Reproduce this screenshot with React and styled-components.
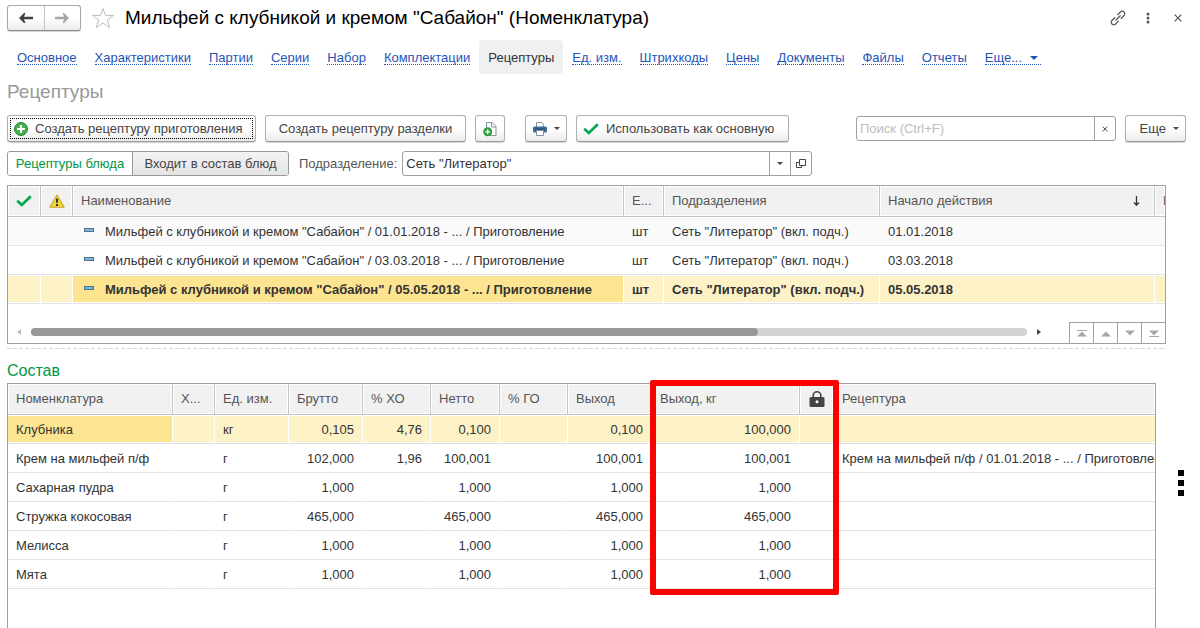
import styled, { createGlobalStyle, css } from 'styled-components'
import { useState } from 'react'

const GlobalStyle = createGlobalStyle`
	* { box-sizing: border-box; }
	body {
		margin: 0;
		background: #fff;
		color: #333;
		font: 13px/16px "Liberation Sans", Arial, sans-serif;
	}
	button, input, table {
		font: inherit;
		color: inherit;
	}
	button { cursor: pointer; }
	svg { display: block; flex: none; }
`

const Page = styled.div`
	display: flex;
	flex-direction: column;
	min-height: 100vh;
	padding: 4px 14px 0 7px;
`

const Header = styled.header`
	display: flex;
	align-items: center;
	height: 28px;
`

const History = styled.div`
	display: flex;
	width: 74px;
	height: 26px;
	border: 1px solid #a8a8a8;
	border-bottom-color: #8c8c8c;
	border-radius: 3px;
	background: linear-gradient(#fff 50%, #ececec);
	box-shadow: 0 1px 1px #d0d0d0;
`

const HistoryBtn = styled.button`
	flex: 1;
	display: flex;
	align-items: center;
	justify-content: center;
	padding: 0;
	border: 0;
	border-left: ${props => props.$split ? '1px solid #c4c4c4' : '0'};
	background: none;
	color: ${props => props.$split ? '#a6a6a6' : '#404040'};
`

const IconBtn = styled.button`
	display: flex;
	align-items: center;
	justify-content: center;
	width: ${props => props.$w || 16}px;
	height: 24px;
	padding: 0;
	border: 0;
	background: none;
	color: #555;
`

const Title = styled.h1`
	flex: 1;
	margin: 0;
	font-size: 19px;
	font-weight: 400;
	line-height: 24px;
	color: #000;
`

const WindowBtns = styled.div`
	display: flex;
	gap: 14px;
`

const Tabs = styled.nav`
	display: flex;
	height: 34px;
	margin-top: 8px;
	padding-left: 1px;
`

const Tab = styled.a`
	display: flex;
	align-items: center;
	padding: 2px 9px 0;
	border-radius: 4px;
	color: ${props => props.$active ? '#333' : '#1f54b8'};
	background: ${props => props.$active ? '#f0f0f0' : 'none'};
	text-decoration: none;
	white-space: nowrap;

	span {
		display: flex;
		align-items: center;
		gap: 8px;
		height: 14px;
		border-bottom: 1px dotted ${props => props.$active ? 'transparent' : '#1f54b8'};
	}
	svg { margin-right: 3px; }
`

const Heading = styled.h2`
	margin: 6px 0 0;
	font-size: 19px;
	font-weight: 400;
	line-height: 24px;
	color: #999;
`

const Toolbar = styled.div`
	display: flex;
	align-items: center;
	gap: 9px;
	margin-top: 11px;
`

const Button = styled.button`
	display: flex;
	align-items: center;
	justify-content: ${props => props.$start ? 'flex-start' : 'center'};
	gap: 7px;
	min-width: ${props => props.$w}px;
	height: 27px;
	margin-right: ${props => props.$gap || 0}px;
	padding: 0 6px;
	border: 1px solid #b0b0b0;
	border-bottom-color: #999;
	border-radius: 3px;
	background: linear-gradient(#fff 50%, #ebebeb);
	box-shadow: 0 1px 1px #d4d4d4;
	color: #444;
	white-space: nowrap;

	${props => props.$focus && css`
		outline: 1px dotted #000;
		outline-offset: -4px;
	`}
`

const MoreButton = styled(Button)`
	justify-content: flex-end;
`

const Field = styled.div`
	display: flex;
	width: ${props => props.$w}px;
	height: 25px;
	margin-left: ${props => props.$right ? 'auto' : '0'};
	border: 1px solid #a0a0a0;
	border-radius: 3px;
	background: #fff;

	input {
		flex: 1;
		min-width: 0;
		padding: 0 3px;
		border: 0;
		outline: 0;
		background: none;
		color: #333;
	}
	input::placeholder { color: #bdbdbd; }
`

const FieldBtn = styled.button`
	display: flex;
	align-items: center;
	justify-content: center;
	width: 21px;
	padding: 0;
	border: 0;
	border-left: 1px solid #a0a0a0;
	background: none;
	color: #444;
`

const FilterRow = styled.div`
	display: flex;
	align-items: center;
	margin-top: 9px;
	color: #555;

	label { margin: 0 5px 0 10px; }
`

const Switch = styled.div`
	display: flex;
	height: 25px;
	border: 1px solid #999;
	border-radius: 3px;
	overflow: hidden;
`

const SwitchBtn = styled.button`
	min-width: ${props => props.$w}px;
	padding: 0;
	border: 0;
	border-left: ${props => props.$second ? '1px solid #999' : '0'};
	background: ${props => props.$on ? '#fff' : 'linear-gradient(#f4f4f4, #e4e4e4)'};
	color: ${props => props.$on ? '#009646' : '#444'};
	white-space: nowrap;
`

const ListBox = styled.div`
	margin: 9px 20px 0 0;
	border: 1px solid #a0a0a0;
	overflow: hidden;
`

const Table = styled.table`
	width: 100%;
	table-layout: fixed;
	border-collapse: separate;
	border-spacing: 0;
`

const Col = styled.col`
	width: ${props => props.$w ? props.$w + 'px' : 'auto'};
`

const Th = styled.th`
	height: 31px;
	padding: 0 0 0 ${props => props.$icon ? 0 : 8}px;
	border-right: ${props => props.$last ? '0' : '1px solid #c4c4c4'};
	border-bottom: 1px solid #c4c4c4;
	background: #f1f1f1;
	box-shadow: inset 0 0 0 1px #fff;
	color: #555;
	font-weight: 400;
	text-align: left;
	white-space: nowrap;
	overflow: hidden;

	svg { margin: ${props => props.$icon ? '0 auto' : '0'}; }
`

const Sorted = styled.div`
	display: flex;
	align-items: center;
	justify-content: space-between;
	padding-right: 14px;
`

const Tr = styled.tr`
	background: ${props => props.$striped ? '#fafafa' : '#fff'};
	font-weight: ${props => props.$bold ? '700' : '400'};
`

const Td = styled.td`
	height: 29px;
	padding: 2px ${props => props.$last ? 0 : 8}px 0 8px;
	border-right: ${props => props.$last ? '0' : '1px solid transparent'};
	border-bottom: 1px solid #e2e2e2;
	text-align: ${props => props.$num ? 'right' : 'left'};
	white-space: nowrap;
	overflow: hidden;

	${props => props.$selected && css`
		border-right-color: #fff;
		background: ${props.$current ? '#fde491' : '#fdf1c6'};
		box-shadow: inset 0 1px #fff, inset 0 -1px #fff;
	`}
`

const NameCell = styled.div`
	display: flex;
	align-items: center;
	gap: 11px;
	padding-left: 3px;
`

const Dash = styled.i`
	flex: none;
	width: 10px;
	height: 4px;
	margin-bottom: 4px;
	border: 1px solid #4c7391;
	background: #7fb4d8;
`

const ListFooter = styled.div`
	display: flex;
	align-items: flex-end;
	height: 39px;
`

const ScrollArea = styled.div`
	flex: 1;
	display: flex;
	align-items: center;
	gap: 10px;
	height: 23px;
	padding: 0 28px 0 9px;
`

const Track = styled.div`
	flex: 1;
	height: 8px;
	border-radius: 4px;
	background: #d4d4d4;
`

const Thumb = styled.div`
	width: 73%;
	height: 8px;
	border-radius: 4px;
	background: #999;
`

const PageBtn = styled.button`
	display: flex;
	align-items: center;
	justify-content: center;
	width: 24px;
	height: 21px;
	padding: 0;
	border: solid #a0a0a0;
	border-width: 1px 0 0 1px;
	background: #fff;
	color: #a8a8a8;
`

const Splitter = styled.div`
	height: 1px;
	margin: 4px 20px 0 0;
	background: repeating-linear-gradient(90deg, #d4d4d4 0 4px, transparent 4px 6px);
`

const SubHeading = styled.h3`
	margin: 12px 0 2px;
	font-size: 16px;
	font-weight: 400;
	line-height: 20px;
	color: #009646;
`

const Bottom = styled.div`
	position: relative;
	flex: 1;
	display: flex;
	align-items: stretch;
`

const Composition = styled.div`
	flex: 1;
	min-width: 0;
	border: 1px solid #a0a0a0;
	border-bottom: 0;
	overflow: hidden;
`

// red frame over the "Выход, кг" and lock columns
const Mark = styled.div`
	position: absolute;
	left: 643px;
	top: -3px;
	width: 189px;
	height: 215px;
	border: 6px solid #f00;
	border-radius: 2px;
	pointer-events: none;
`

const Side = styled.div`
	width: 30px;
	padding-top: 88px;
	display: flex;
	justify-content: flex-end;
	align-items: flex-start;
`

const tabs = [
	'Основное', 'Характеристики', 'Партии', 'Серии', 'Набор', 'Комплектации', 'Рецептуры',
	'Ед. изм.', 'Штрихкоды', 'Цены', 'Документы', 'Файлы', 'Отчеты',
]

const recipes = [
	{ name: 'Мильфей с клубникой и кремом "Сабайон" / 01.01.2018 - ... / Приготовление', date: '01.01.2018' },
	{ name: 'Мильфей с клубникой и кремом "Сабайон" / 03.03.2018 - ... / Приготовление', date: '03.03.2018' },
	{ name: 'Мильфей с клубникой и кремом "Сабайон" / 05.05.2018 - ... / Приготовление', date: '05.05.2018', main: true },
]

const columns = [
	{ title: 'Номенклатура', w: 165 },
	{ title: 'Х...', w: 42 },
	{ title: 'Ед. изм.', w: 74 },
	{ title: 'Брутто', w: 74, num: true },
	{ title: '% ХО', w: 68, num: true },
	{ title: 'Нетто', w: 69, num: true },
	{ title: '% ГО', w: 68, num: true },
	{ title: 'Выход', w: 84, num: true },
	{ title: 'Выход, кг', w: 148, num: true },
	{ title: 'lock', w: 34, icon: true },
	{ title: 'Рецептура', last: true },
]

const items = [
	['Клубника', '', 'кг', '0,105', '4,76', '0,100', '', '0,100', '100,000', '', ''],
	['Крем на мильфей п/ф', '', 'г', '102,000', '1,96', '100,001', '', '100,001', '100,001', '', 'Крем на мильфей п/ф / 01.01.2018 - ... / Приготовление'],
	['Сахарная пудра', '', 'г', '1,000', '', '1,000', '', '1,000', '1,000', '', ''],
	['Стружка кокосовая', '', 'г', '465,000', '', '465,000', '', '465,000', '465,000', '', ''],
	['Мелисса', '', 'г', '1,000', '', '1,000', '', '1,000', '1,000', '', ''],
	['Мята', '', 'г', '1,000', '', '1,000', '', '1,000', '1,000', '', ''],
]

function Arrow({ flip }) {
	return (
		<svg width="14" height="10" viewBox="0 0 14 10" transform={flip ? 'scale(-1 1)' : undefined}>
			<path d="M0 5 5 0h1.4L5 3.8h9v2.4H5L6.400 10H5z" fill="currentColor" />
		</svg>
	)
}

function Caret({ w = 6, h = 3 }) {
	return (
		<svg width={w} height={h} viewBox="0 0 6 3" preserveAspectRatio="none">
			<path d="M0 0h6L3 3z" fill="currentColor" />
		</svg>
	)
}

function Check() {
	return (
		<svg width="16" height="12" viewBox="0 0 16 12">
			<path d="M1.2 5.8 5.8 10 14.8 1.2" fill="none" stroke="#00a651" strokeWidth="2.7" />
		</svg>
	)
}

function Plus() {
	return (
		<svg width="14" height="14" viewBox="0 0 14 14">
			<circle cx="7" cy="7" r="6.5" fill="#43ad4b" stroke="#1f8b34" />
			<path d="M7 3v8M3 7h8" stroke="#fff" strokeWidth="2.2" />
		</svg>
	)
}

function Cross({ size = 8 }) {
	return (
		<svg width={size} height={size} viewBox="0 0 8 8">
			<path d="M.7.7l6.6 6.6M7.3.7.7 7.3" stroke="currentColor" strokeWidth="1.2" />
		</svg>
	)
}

function PageArrow({ up, bar }) {
	return (
		<svg width="10" height="7" viewBox="0 0 10 7" transform={up ? undefined : 'scale(1 -1)'}>
			{bar && <path d="M0 .5h10" stroke="currentColor" />}
			<path d="M5 1.5 10 6.500H0z" fill="currentColor" />
		</svg>
	)
}

function TopBar() {
	return (
		<Header>
			<History>
				<HistoryBtn aria-label="Назад"><Arrow /></HistoryBtn>
				<HistoryBtn aria-label="Вперед" $split><Arrow flip /></HistoryBtn>
			</History>
			<IconBtn aria-label="В избранное" $w={44}>
				<svg width="24" height="22" viewBox="0 0 24 22">
					<path d="M12 1.6 14.6 8.4H22.6L16.3 13 18.7 20.6 12 16 5.3 20.6 7.7 13 1.4 8.4H9.4z" fill="#fff" stroke="#b9bdc4" />
				</svg>
			</IconBtn>
			<Title>Мильфей с клубникой и кремом "Сабайон" (Номенклатура)</Title>
			<WindowBtns>
				<IconBtn aria-label="Ссылка">
					<svg width="16" height="16" viewBox="0 0 16 16" fill="none" stroke="currentColor" strokeWidth="1.2">
						<g transform="rotate(-45 8 8)">
							<path d="M6.500 10.500H2a2.500 2.500 0 0 1-2.500-2.500v0A2.500 2.500 0 0 1 2 5.500h4.500" />
							<path d="M9.500 5.500H14a2.500 2.500 0 0 1 2.500 2.500v0a2.500 2.500 0 0 1-2.500 2.500H9.500" />
							<path d="M4.500 8h7" />
						</g>
					</svg>
				</IconBtn>
				<IconBtn aria-label="Меню">
					<svg width="4" height="12" viewBox="0 0 4 12" fill="currentColor">
						<circle cx="2" cy="2" r="1.500" />
						<circle cx="2" cy="6" r="1.500" />
						<circle cx="2" cy="10" r="1.500" />
					</svg>
				</IconBtn>
				<IconBtn aria-label="Закрыть"><Cross /></IconBtn>
			</WindowBtns>
		</Header>
	)
}

function RecipeList() {
	return (
		<ListBox>
			<Table>
				<colgroup>
					<Col $w={33} /><Col $w={32} /><Col $w={551} /><Col $w={40} /><Col $w={216} /><Col /><Col $w={10} />
				</colgroup>
				<thead>
					<tr>
						<Th $icon aria-label="Основная"><Check /></Th>
						<Th $icon aria-label="Внимание">
							<svg width="16" height="14" viewBox="0 0 16 14">
								<path d="M8 .8 15.3 13.2H.7z" fill="#f3d43b" stroke="#c9a227" strokeLinejoin="round" />
								<path d="M8 4.5v4.2M8 10v2" stroke="#333" strokeWidth="2" />
							</svg>
						</Th>
						<Th>Наименование</Th>
						<Th>Е...</Th>
						<Th>Подразделения</Th>
						<Th>
							<Sorted>
								Начало действия
								<svg width="7" height="10" viewBox="0 0 7 10">
									<path d="M3.5 0v9M1 6.5l2.5 2.7L6 6.5" fill="none" stroke="#333" strokeWidth="1.3" />
								</svg>
							</Sorted>
						</Th>
						<Th $last>Номер</Th>
					</tr>
				</thead>
				<tbody>
					{recipes.map((r, i) => (
						<Tr key={r.date} $striped={i == 0} $bold={r.main}>
							<Td $selected={r.main} />
							<Td $selected={r.main} />
							<Td $selected={r.main} $current><NameCell><Dash />{r.name}</NameCell></Td>
							<Td $selected={r.main}>шт</Td>
							<Td $selected={r.main}>Сеть "Литератор" (вкл. подч.)</Td>
							<Td $selected={r.main}>{r.date}</Td>
							<Td $selected={r.main} $last />
						</Tr>
					))}
				</tbody>
			</Table>
			<ListFooter>
				<ScrollArea>
					<svg width="4" height="6" viewBox="0 0 4 6"><path d="M4 0v6L0 3z" fill="#bbb" /></svg>
					<Track><Thumb /></Track>
					<svg width="4" height="6" viewBox="0 0 4 6"><path d="M0 0v6l4-3z" fill="#444" /></svg>
				</ScrollArea>
				<PageBtn aria-label="В начало"><PageArrow up bar /></PageBtn>
				<PageBtn aria-label="Вверх"><PageArrow up /></PageBtn>
				<PageBtn aria-label="Вниз"><PageArrow /></PageBtn>
				<PageBtn aria-label="В конец"><PageArrow bar /></PageBtn>
			</ListFooter>
		</ListBox>
	)
}

function CompositionTable() {
	return (
		<Composition>
			<Table>
				<colgroup>
					{columns.map((c) => <Col key={c.title} $w={c.w} />)}
				</colgroup>
				<thead>
					<tr>
						{columns.map((c) => (
							<Th key={c.title} $icon={c.icon} $last={c.last}>
								{
									c.icon ?
										<svg width="16" height="16" viewBox="0 0 16 16">
											<path d="M4.2 7V4.6a3.8 3.8 0 0 1 7.6 0V7" fill="none" stroke="#444" strokeWidth="1.6" />
											<rect x=".5" y="6" width="15" height="10" rx="1.5" fill="#444" />
											<circle cx="8" cy="10.7" r="1.5" fill="#fff" />
										</svg> : c.title
								}
							</Th>
						))}
					</tr>
				</thead>
				<tbody>
					{items.map((row, i) => (
						<Tr key={row[0]}>
							{row.map((cell, j) => (
								<Td key={j} $num={columns[j].num} $last={columns[j].last} $selected={i == 0} $current={j == 0}>{cell}</Td>
							))}
						</Tr>
					))}
				</tbody>
			</Table>
		</Composition>
	)
}

export default function App() {

	let [mode, setMode] = useState(0)
	let [unit, setUnit] = useState('Сеть "Литератор"')
	let [search, setSearch] = useState('')

	return (
		<>
			<GlobalStyle />
			<Page>
				<TopBar />
				<Tabs>
					{tabs.map((t) => (
						<Tab key={t} href="#" $active={t == 'Рецептуры'}><span>{t}</span></Tab>
					))}
					<Tab href="#"><span>Еще...<Caret w={8} h={4} /></span></Tab>
				</Tabs>
				<Heading>Рецептуры</Heading>

				<Toolbar>
					<Button $w={249} $start $focus><Plus />Создать рецептуру приготовления</Button>
					<Button $w={201}>Создать рецептуру разделки</Button>
					<Button $w={30} $gap={11} aria-label="Создать копированием">
						<svg width="14" height="16" viewBox="0 0 14 16">
							<path d="M3.500 1.500h5.500l4 4v9h-9.500z" fill="#fff" stroke="#8394a5" />
							<path d="M8.500 1.500v4.500h4.500" fill="none" stroke="#8394a5" />
							<circle cx="4.7" cy="10.8" r="4.5" fill="#2d9f3c" />
							<path d="M4.7 8.300v5M2.200 10.800h5" stroke="#fff" strokeWidth="1.3" />
						</svg>
					</Button>
					<Button $w={42} aria-label="Печать">
						<svg width="14" height="14" viewBox="0 0 14 14">
							<path d="M3.5 5V.5h5l2 2V5" fill="#fff" stroke="#8394a5" />
							<rect y="4.5" width="14" height="6" rx="1.5" fill="#3f6d9a" />
							<path d="M2 7h10" stroke="#1f4468" />
							<path d="M3.5 8.5h7v5h-7z" fill="#fff" stroke="#8394a5" />
						</svg>
						<Caret />
					</Button>
					<Button $w={213} $start><Check />Использовать как основную</Button>
					<Field $w={260} $right>
						<input aria-label="Поиск" placeholder="Поиск (Ctrl+F)" value={search} onChange={(e) => { setSearch(e.target.value) }} />
						<FieldBtn aria-label="Очистить" onClick={() => { setSearch('') }}><Cross size={6} /></FieldBtn>
					</Field>
					<MoreButton $w={61}>Еще<Caret /></MoreButton>
				</Toolbar>

				<FilterRow>
					<Switch>
						<SwitchBtn $w={124} $on={mode == 0} onClick={() => { setMode(0) }}>Рецептуры блюда</SwitchBtn>
						<SwitchBtn $w={156} $second $on={mode == 1} onClick={() => { setMode(1) }}>Входит в состав блюд</SwitchBtn>
					</Switch>
					<label htmlFor="unit">Подразделение:</label>
					<Field $w={410}>
						<input id="unit" value={unit} onChange={(e) => { setUnit(e.target.value) }} />
						<FieldBtn aria-label="Выбрать"><Caret /></FieldBtn>
						<FieldBtn aria-label="Открыть">
							<svg width="10" height="10" viewBox="0 0 10 10" fill="none" stroke="currentColor">
								<path d="M3.5.5h6v6h-6z" />
								<path d="M3.5 3.5h-3v5h5v-2" />
							</svg>
						</FieldBtn>
					</Field>
				</FilterRow>

				<RecipeList />
				<Splitter />
				<SubHeading>Состав</SubHeading>
				<Bottom>
					<CompositionTable />
					<Side>
						<IconBtn $w={10} aria-label="Еще действия">
							<svg width="6" height="26" viewBox="0 0 6 26">
								<path d="M0 0h6v6H0zM0 10h6v6H0zM0 20h6v6H0z" fill="#000" />
							</svg>
						</IconBtn>
					</Side>
					<Mark />
				</Bottom>
			</Page>
		</>
	)
}
